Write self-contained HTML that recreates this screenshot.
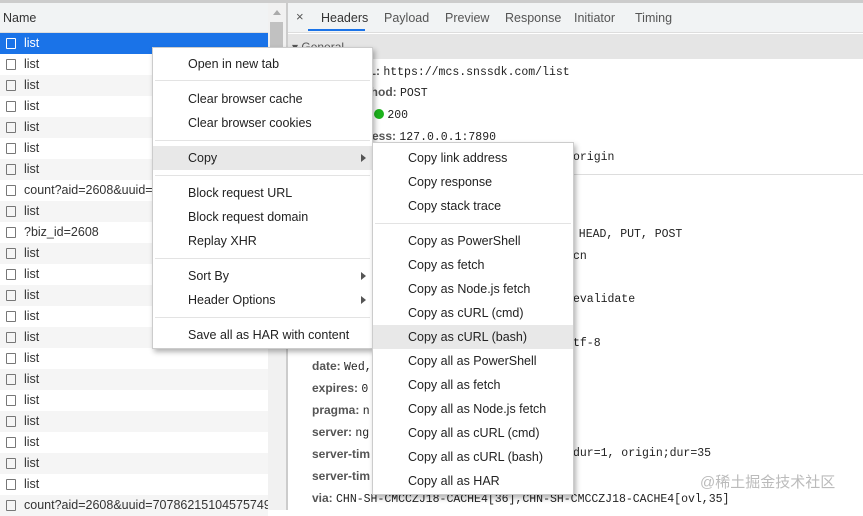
<!DOCTYPE html>
<html><head><meta charset="utf-8"><style>
*{margin:0;padding:0;box-sizing:border-box}
body{width:863px;height:510px;overflow:hidden;background:#fff;font-family:"Liberation Sans","Noto Sans CJK SC",sans-serif;font-size:12px;color:#222;position:relative}
.a{position:absolute;white-space:nowrap}
.row{position:absolute;left:0;width:268px;height:21px;line-height:21px;padding-left:24px;color:#333;white-space:nowrap;overflow:hidden;font-size:12.5px}
.row i{position:absolute;left:6px;top:5px;width:10px;height:11px;border:1px solid #777;border-radius:1px}
.mono{font-family:"Liberation Mono",monospace;font-size:11.5px}
.k{font-weight:bold;color:#555}
.menu{position:absolute;background:#fff;border:1px solid #ccc;box-shadow:2px 3px 5px rgba(0,0,0,.3)}
.mi{position:absolute;left:0;right:0;height:24px;line-height:24px;font-size:12.5px;color:#222;white-space:nowrap}
.sep{position:absolute;left:2px;right:2px;height:1px;background:#e3e3e3}
.arr{position:absolute;right:6px;top:8px;width:0;height:0;border-left:5px solid #555;border-top:4px solid transparent;border-bottom:4px solid transparent}
</style></head><body>
<div class="a" style="left:0;top:0;width:288px;height:33px;background:#f1f3f4;border-top:3px solid #ccc;border-bottom:1px solid #ddd"></div>
<div class="a" style="left:3px;top:11px;font-size:12.5px;color:#333">Name</div>
<div class="a" style="left:268px;top:3px;width:18px;height:507px;background:#f1f1f1"></div>
<div class="a" style="left:270px;top:22px;width:13px;height:40px;background:#c1c1c1"></div>
<div class="a" style="left:273px;top:10px;width:0;height:0;border-bottom:5px solid #aaa;border-left:4px solid transparent;border-right:4px solid transparent"></div>
<div class="a" style="left:286px;top:0;width:2px;height:510px;background:#ccc"></div>
<div class="row" style="top:33px;background:#1a73e8;color:#fff"><i style="border-color:#fff"></i>list</div>
<div class="row" style="top:54px"><i></i>list</div>
<div class="row" style="top:75px;background:#f5f5f5"><i></i>list</div>
<div class="row" style="top:96px"><i></i>list</div>
<div class="row" style="top:117px;background:#f5f5f5"><i></i>list</div>
<div class="row" style="top:138px"><i></i>list</div>
<div class="row" style="top:159px;background:#f5f5f5"><i></i>list</div>
<div class="row" style="top:180px"><i></i>count?aid=2608&amp;uuid=</div>
<div class="row" style="top:201px;background:#f5f5f5"><i></i>list</div>
<div class="row" style="top:222px"><i></i>?biz_id=2608</div>
<div class="row" style="top:243px;background:#f5f5f5"><i></i>list</div>
<div class="row" style="top:264px"><i></i>list</div>
<div class="row" style="top:285px;background:#f5f5f5"><i></i>list</div>
<div class="row" style="top:306px"><i></i>list</div>
<div class="row" style="top:327px;background:#f5f5f5"><i></i>list</div>
<div class="row" style="top:348px"><i></i>list</div>
<div class="row" style="top:369px;background:#f5f5f5"><i></i>list</div>
<div class="row" style="top:390px"><i></i>list</div>
<div class="row" style="top:411px;background:#f5f5f5"><i></i>list</div>
<div class="row" style="top:432px"><i></i>list</div>
<div class="row" style="top:453px;background:#f5f5f5"><i></i>list</div>
<div class="row" style="top:474px"><i></i>list</div>
<div class="row" style="top:495px;background:#f5f5f5"><i></i>count?aid=2608&amp;uuid=707862151045757494.</div>
<div class="a" style="left:288px;top:0;width:575px;height:33px;background:#f1f3f4;border-top:3px solid #ccc;border-bottom:1px solid #ddd"></div>
<div class="a" style="left:296px;top:9px;font-size:13px;color:#555">×</div>
<div class="a" style="left:308px;top:29px;width:57px;height:2px;background:#1a73e8"></div>
<div class="a" style="left:321px;top:11px;font-size:12.5px;color:#333">Headers</div>
<div class="a" style="left:384px;top:11px;font-size:12.5px;color:#555">Payload</div>
<div class="a" style="left:445px;top:11px;font-size:12.5px;color:#555">Preview</div>
<div class="a" style="left:505px;top:11px;font-size:12.5px;color:#555">Response</div>
<div class="a" style="left:574px;top:11px;font-size:12.5px;color:#555">Initiator</div>
<div class="a" style="left:635px;top:11px;font-size:12.5px;color:#555">Timing</div>
<div class="a" style="left:288px;top:34px;width:575px;height:25px;background:#e5e5e5"></div>
<div class="a" style="left:292px;top:40px;color:#555">▾ General</div>
<div class="a" style="left:360px;top:64px"><span class="k">RL:</span> <span class="mono">https://mcs.snssdk.com/list</span></div>
<div class="a" style="left:360px;top:85px"><span class="k">ethod:</span> <span class="mono">POST</span></div>
<div class="a" style="left:360px;top:107px"><span class="k">e:</span> <span style="display:inline-block;width:10px;height:10px;border-radius:50%;background:#1db31d;vertical-align:-1px"></span> <span class="mono">200</span></div>
<div class="a" style="left:360px;top:129px"><span class="k">dress:</span> <span class="mono">127.0.0.1:7890</span></div>
<div class="a mono" style="left:573px;top:151px">origin</div>
<div class="a" style="left:288px;top:174px;width:575px;height:1px;background:#ddd"></div>
<div class="a mono" style="left:565px;top:228px">, HEAD, PUT, POST</div>
<div class="a mono" style="left:573px;top:250px">cn</div>
<div class="a mono" style="left:573px;top:293px">evalidate</div>
<div class="a mono" style="left:573px;top:337px">tf-8</div>
<div class="a" style="left:312px;top:359px"><span class="k">date:</span> <span class="mono">Wed,</span></div>
<div class="a" style="left:312px;top:381px"><span class="k">expires:</span> <span class="mono">0</span></div>
<div class="a" style="left:312px;top:403px"><span class="k">pragma:</span> <span class="mono">n</span></div>
<div class="a" style="left:312px;top:425px"><span class="k">server:</span> <span class="mono">ng</span></div>
<div class="a" style="left:312px;top:447px"><span class="k">server-tim</span></div>
<div class="a mono" style="left:573px;top:447px">dur=1, origin;dur=35</div>
<div class="a" style="left:312px;top:469px"><span class="k">server-tim</span></div>
<div class="a" style="left:312px;top:491px"><span class="k">via:</span> <span class="mono">CHN-SH-CMCCZJ18-CACHE4[36],CHN-SH-CMCCZJ18-CACHE4[ovl,35]</span></div>
<div class="a" style="left:700px;top:471px;font-size:15px;color:#bbb">@稀土掘金技术社区</div>
<div class="menu" style="left:152px;top:47px;width:221px;height:302px">
<div class="mi" style="top:4px;padding-left:35px">Open in new tab</div>
<div class="sep" style="top:32px"></div>
<div class="mi" style="top:39px;padding-left:35px">Clear browser cache</div>
<div class="mi" style="top:63px;padding-left:35px">Clear browser cookies</div>
<div class="sep" style="top:92px"></div>
<div class="mi" style="top:98px;padding-left:35px;background:#e8e8e8">Copy<span class="arr"></span></div>
<div class="sep" style="top:127px"></div>
<div class="mi" style="top:133px;padding-left:35px">Block request URL</div>
<div class="mi" style="top:157px;padding-left:35px">Block request domain</div>
<div class="mi" style="top:181px;padding-left:35px">Replay XHR</div>
<div class="sep" style="top:210px"></div>
<div class="mi" style="top:216px;padding-left:35px">Sort By<span class="arr"></span></div>
<div class="mi" style="top:240px;padding-left:35px">Header Options<span class="arr"></span></div>
<div class="sep" style="top:269px"></div>
<div class="mi" style="top:275px;padding-left:35px">Save all as HAR with content</div>
</div>
<div class="menu" style="left:372px;top:142px;width:202px;height:353px">
<div class="mi" style="top:3px;padding-left:35px">Copy link address</div>
<div class="mi" style="top:27px;padding-left:35px">Copy response</div>
<div class="mi" style="top:51px;padding-left:35px">Copy stack trace</div>
<div class="sep" style="top:80px"></div>
<div class="mi" style="top:86px;padding-left:35px">Copy as PowerShell</div>
<div class="mi" style="top:110px;padding-left:35px">Copy as fetch</div>
<div class="mi" style="top:134px;padding-left:35px">Copy as Node.js fetch</div>
<div class="mi" style="top:158px;padding-left:35px">Copy as cURL (cmd)</div>
<div class="mi" style="top:182px;padding-left:35px;background:#e8e8e8">Copy as cURL (bash)</div>
<div class="mi" style="top:206px;padding-left:35px">Copy all as PowerShell</div>
<div class="mi" style="top:230px;padding-left:35px">Copy all as fetch</div>
<div class="mi" style="top:254px;padding-left:35px">Copy all as Node.js fetch</div>
<div class="mi" style="top:278px;padding-left:35px">Copy all as cURL (cmd)</div>
<div class="mi" style="top:302px;padding-left:35px">Copy all as cURL (bash)</div>
<div class="mi" style="top:326px;padding-left:35px">Copy all as HAR</div>
</div>
</body></html>
